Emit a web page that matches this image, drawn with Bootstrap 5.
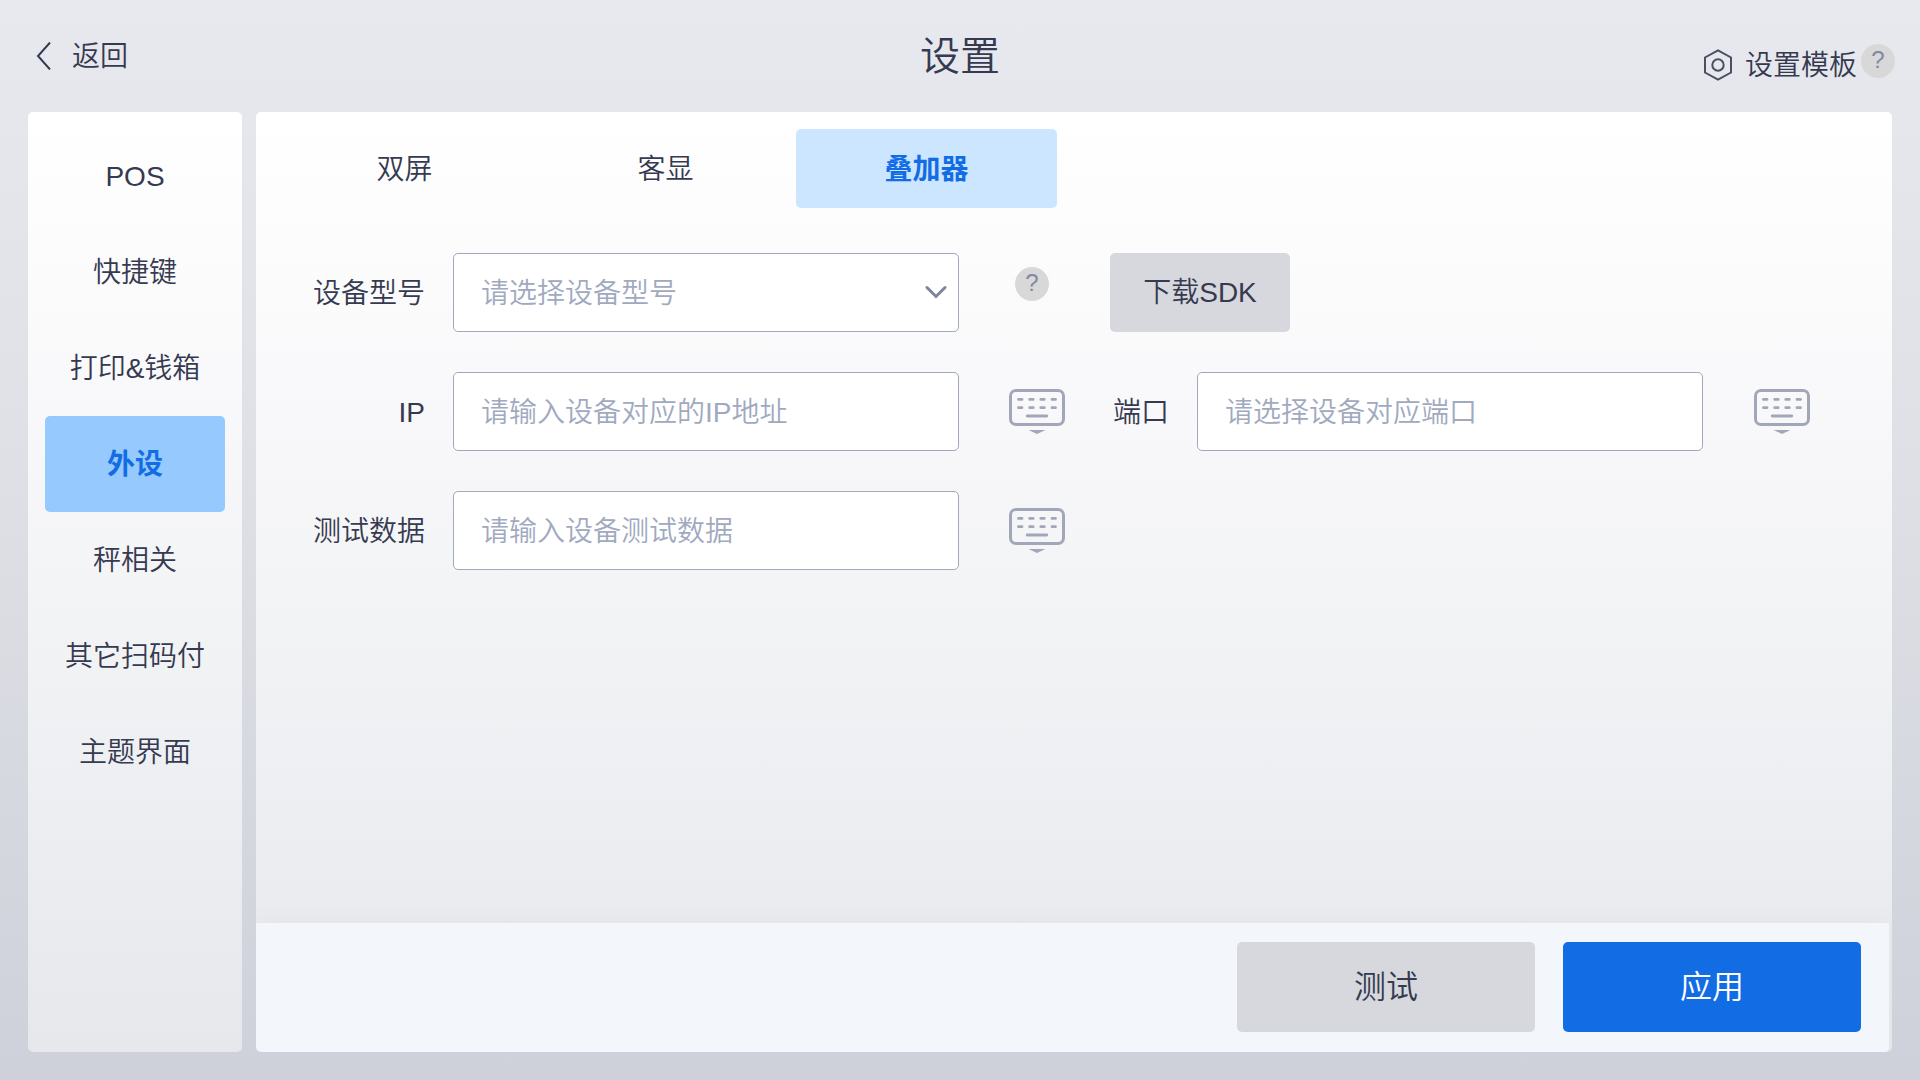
<!DOCTYPE html>
<html lang="zh-CN">
<head>
<meta charset="utf-8">
<meta name="viewport" content="width=device-width, initial-scale=1">
<title>设置</title>
<link href="https://cdn.jsdelivr.net/npm/bootstrap@5.3.0/dist/css/bootstrap.min.css" rel="stylesheet">
<style>
  :root { --ink: #353a50; --muted: #a1a9bf; --brand: #126de4; --grey: #d7d8dd; --thin: 350; }
  body {
    font-family: "Liberation Sans", "Noto Sans CJK SC", sans-serif;
    font-size: 28px; line-height: 40px; font-weight: var(--thin); color: var(--ink);
    background: linear-gradient(#e8e9ee, #e0e1e6 40%, #ced1da) fixed;
  }
  .topbar { height: 112px; padding: 0 28px; }
  .topbar > * { flex: 1 1 0; }
  .topbar h1 { font-size: 40px; line-height: 56px; font-weight: var(--thin); }
  .plain-btn { background: none; border: 0; padding: 0; color: inherit; font-weight: inherit; }
  .back-btn { gap: 20px; padding-left: 8px; }
  .back-btn span, .tpl-btn span { padding-top: 2px; }
  .tpl-btn { gap: 12px; }
  .tpl-group { margin-right: -3px; padding-top: 18px; gap: 4px; }
  .help-dot {
    width: 34px; height: 34px; border: 0; padding: 0 0 2px; border-radius: 50%;
    background: #d8d8d8; color: #7f89a3; font-size: 24px; line-height: 32px; text-align: center;
  }
  .workspace { gap: 14px; padding: 0 28px 28px; }
  .panel { border-radius: 5px; background: linear-gradient(#fff, #f8f8fa 33%, #f2f3f5 55%, #e7e8ec); }
  .side { width: 214px; padding: 16px 17px; }
  .side .nav-link { height: 96px; border-radius: 5px; color: var(--ink); white-space: nowrap; padding: 2px 0 0; }
  .side .nav-link.active { background: #96c9fd; color: var(--brand); font-weight: 700; }
  .tabs-row { padding: 17px 18px 0; }
  .tabs-row .nav-link { width: 261px; height: 79px; border-radius: 5px; color: var(--ink); padding: 2px 0 0; }
  .tabs-row .nav-link.active { background: #cce6ff; color: var(--brand); font-weight: 700; }
  .device-form {
    display: grid; align-items: center; row-gap: 40px; padding: 45px 82px 0 17px;
    grid-template-columns: 180px minmax(0, 506fr) 151px 87px minmax(0, 506fr) 107px;
  }
  .device-form label { text-align: right; padding: 2px 28px 0 0; white-space: nowrap; }
  .device-form .form-control, .device-form .form-select {
    height: 79px; padding: 2px 27px 0; font-size: 28px; line-height: 40px; font-weight: var(--thin);
    color: var(--muted); background: #fff; border: 1px solid #a1a9bf; border-radius: 5px;
  }
  .form-control::placeholder { color: var(--muted); opacity: 1; }
  .select-arrow { position: absolute; right: 12px; top: 32px; pointer-events: none; }
  .aside-cell { display: flex; justify-content: flex-end; }
  .aside-mid { padding-right: 45px; }
  .help-cell { padding: 0 0 18px 56px; }
  .fill-btn { border: 0; border-radius: 5px; background: var(--grey); color: var(--ink); font-weight: var(--thin); }
  .sdk-btn { width: 180px; height: 79px; font-size: 28px; line-height: 40px; grid-column: 4 / 7; }
  .actions {
    gap: 28px; padding: 19px 28px 20px; margin-right: 3px; background: #f3f6fb;
    border-radius: 0 0 5px 5px; box-shadow: 0 -4px 20px rgba(60, 64, 80, .04);
  }
  .actions .fill-btn { width: 298px; height: 90px; font-size: 32px; line-height: 44px; }
  .actions .apply-btn, .actions .apply-btn:hover { background: var(--brand); color: #fff; }
  svg { display: block; flex: none; }
</style>
</head>
<body class="min-vh-100 d-flex flex-column">
<svg width="0" height="0" class="d-none">
  <symbol id="keyboard" viewBox="0 0 56 45">
    <g fill="none" stroke="#a1a7b9" stroke-linecap="round">
      <rect x="1.5" y="1.5" width="53" height="34" rx="5.5" stroke-width="3"/>
      <path stroke-width="2.8" d="M9.5 10.4h3.500M20.700 10.4h3.500M31.800 10.4h3.500M43 10.4h3.500M9.500 18.700h3.500M20.700 18.700h3.500M31.800 18.700h3.500M43 18.700h3.500M18.200 27h19.600"/>
    </g>
    <path fill="#a1a7b9" d="M19.500 41h17L28 45z"/>
  </symbol>
</svg>

<header class="topbar d-flex align-items-center">
  <div class="d-flex">
    <button type="button" class="plain-btn back-btn d-flex align-items-center">
      <svg width="16" height="28" viewBox="0 0 16 28" fill="none" stroke="#353a50" stroke-width="2"><path d="M14 .5 2 14l12 13.500"/></svg>
      <span>返回</span>
    </button>
  </div>
  <h1 class="text-center m-0">设置</h1>
  <div class="d-flex justify-content-end">
    <div class="tpl-group d-flex align-items-start">
      <button type="button" class="plain-btn tpl-btn d-flex align-items-center">
        <svg width="30" height="32" viewBox="0 0 30 32" fill="none" stroke="#4a4f64" stroke-width="2"><path d="M15 1.300 28 8.500v15L15 30.700 2 23.500v-15z"/><circle cx="15" cy="16" r="5.700"/></svg>
        <span>设置模板</span>
      </button>
      <button type="button" class="help-dot" aria-label="设置模板帮助">?</button>
    </div>
  </div>
</header>

<div class="workspace d-flex flex-grow-1">
  <nav class="panel side flex-shrink-0">
    <div class="nav nav-pills flex-column">
      <a href="#" class="nav-link d-flex align-items-center justify-content-center">POS</a>
      <a href="#" class="nav-link d-flex align-items-center justify-content-center">快捷键</a>
      <a href="#" class="nav-link d-flex align-items-center justify-content-center">打印&amp;钱箱</a>
      <a href="#" class="nav-link active d-flex align-items-center justify-content-center" aria-current="page">外设</a>
      <a href="#" class="nav-link d-flex align-items-center justify-content-center">秤相关</a>
      <a href="#" class="nav-link d-flex align-items-center justify-content-center">其它扫码付</a>
      <a href="#" class="nav-link d-flex align-items-center justify-content-center">主题界面</a>
    </div>
  </nav>

  <main class="panel flex-grow-1 d-flex flex-column overflow-hidden">
    <div class="nav nav-pills tabs-row">
      <button type="button" class="nav-link">双屏</button>
      <button type="button" class="nav-link">客显</button>
      <button type="button" class="nav-link active">叠加器</button>
    </div>

    <form id="device" class="device-form flex-grow-1 align-content-start">
      <label for="model">设备型号</label>
      <div class="position-relative">
        <select id="model" class="form-select"><option>请选择设备型号</option></select>
        <svg class="select-arrow" width="22" height="14" viewBox="0 0 22 14" fill="none" stroke="#7f869c" stroke-width="3" stroke-linecap="round"><path d="M2 2.500 11 11.500 20 2.500"/></svg>
      </div>
      <div class="help-cell"><button type="button" class="help-dot d-block" aria-label="设备型号帮助">?</button></div>
      <button type="button" class="btn fill-btn sdk-btn p-0">下载SDK</button>

      <label for="ip">IP</label>
      <input id="ip" type="text" class="form-control" placeholder="请输入设备对应的IP地址">
      <div class="aside-cell aside-mid"><button type="button" class="plain-btn d-block" aria-label="键盘"><svg width="56" height="45"><use href="#keyboard"/></svg></button></div>
      <label for="port">端口</label>
      <input id="port" type="text" class="form-control" placeholder="请选择设备对应端口">
      <div class="aside-cell"><button type="button" class="plain-btn d-block" aria-label="键盘"><svg width="56" height="45"><use href="#keyboard"/></svg></button></div>

      <label for="testdata">测试数据</label>
      <input id="testdata" type="text" class="form-control" placeholder="请输入设备测试数据">
      <div class="aside-cell aside-mid"><button type="button" class="plain-btn d-block" aria-label="键盘"><svg width="56" height="45"><use href="#keyboard"/></svg></button></div>
    </form>

    <footer class="actions d-flex justify-content-end">
      <button type="button" class="btn fill-btn">测试</button>
      <button type="submit" form="device" class="btn fill-btn apply-btn">应用</button>
    </footer>
  </main>
</div>
<script src="https://cdn.jsdelivr.net/npm/bootstrap@5.3.0/dist/js/bootstrap.bundle.min.js"></script>
</body>
</html>
